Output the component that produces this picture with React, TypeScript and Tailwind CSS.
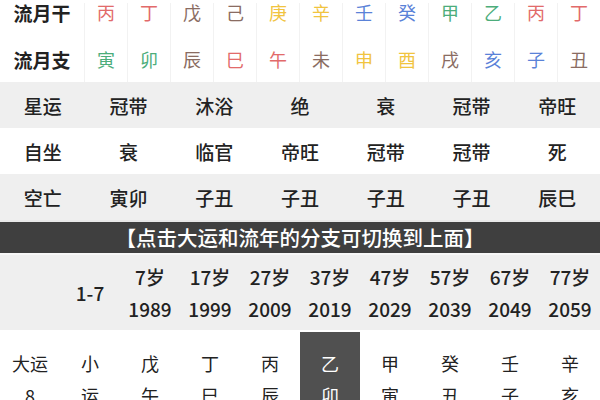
const RED = "text-[#e26a6a]";
const BROWN = "text-[#8a6c62]";
const YELLOW = "text-[#f1c43f]";
const BLUE = "text-[#5a82d8]";
const GREEN = "text-[#4cad7b]";

const GAN = [
  { c: "丙", k: RED },
  { c: "丁", k: RED },
  { c: "戊", k: BROWN },
  { c: "己", k: BROWN },
  { c: "庚", k: YELLOW },
  { c: "辛", k: YELLOW },
  { c: "壬", k: BLUE },
  { c: "癸", k: BLUE },
  { c: "甲", k: GREEN },
  { c: "乙", k: GREEN },
  { c: "丙", k: RED },
  { c: "丁", k: RED },
];

const ZHI = [
  { c: "寅", k: GREEN },
  { c: "卯", k: GREEN },
  { c: "辰", k: BROWN },
  { c: "巳", k: RED },
  { c: "午", k: RED },
  { c: "未", k: BROWN },
  { c: "申", k: YELLOW },
  { c: "酉", k: YELLOW },
  { c: "戌", k: BROWN },
  { c: "亥", k: BLUE },
  { c: "子", k: BLUE },
  { c: "丑", k: BROWN },
];

const INFO = [
  { label: "星运", vals: ["冠带", "沐浴", "绝", "衰", "冠带", "帝旺"], bg: "bg-[#efefef]" },
  { label: "自坐", vals: ["衰", "临官", "帝旺", "冠带", "冠带", "死"], bg: "bg-white" },
  { label: "空亡", vals: ["寅卯", "子丑", "子丑", "子丑", "子丑", "辰巳"], bg: "bg-[#efefef]" },
];

const AGES = [
  ["7岁", "1989"],
  ["17岁", "1999"],
  ["27岁", "2009"],
  ["37岁", "2019"],
  ["47岁", "2029"],
  ["57岁", "2039"],
  ["67岁", "2049"],
  ["77岁", "2059"],
];

const DAYUN = [
  ["戊", "午"],
  ["丁", "巳"],
  ["丙", "辰"],
  ["乙", "卯"],
  ["甲", "寅"],
  ["癸", "丑"],
  ["壬", "子"],
  ["辛", "亥"],
];

function GanZhiRow({ label, items, first }: { label: string; items: { c: string; k: string }[]; first?: boolean }) {
  return (
    <div className={`flex ${first ? "h-[36px] items-start pt-[3px]" : "h-[46px] items-center"}`}>
      <div className="w-[84px] text-center text-[19px] font-bold text-[#222]">{label}</div>
      {items.map((it, i) => (
        <div
          key={i}
          className={`w-[43px] h-full flex justify-center border-l border-[#f2f2f2] text-[18px] ${first ? "items-start" : "items-center"} ${it.k}`}
        >
          {it.c}
        </div>
      ))}
    </div>
  );
}

export default function App() {
  return (
    <div
      className="w-[600px] h-[400px] overflow-hidden bg-white leading-none"
      style={{ fontFamily: '"Noto Sans CJK SC", "Noto Sans", sans-serif' }}
    >
      <GanZhiRow label="流月干" items={GAN} first />
      <GanZhiRow label="流月支" items={ZHI} />

      {INFO.map((row) => (
        <div key={row.label} className={`grid grid-cols-7 items-center h-[46px] ${row.bg}`}>
          <div className="text-center text-[19px] font-medium text-[#222]">{row.label}</div>
          {row.vals.map((v, i) => (
            <div key={i} className="text-center text-[19px] font-medium text-[#222]">
              {v}
            </div>
          ))}
        </div>
      ))}

      <div className="h-[2px] bg-[#e8e8e8]" />
      <div className="h-[31px] bg-[#3f3f3f] flex items-center justify-center text-white text-[20.5px] font-medium">
        【点击大运和流年的分支可切换到上面】
      </div>
      <div className="h-[2px] bg-[#f7f7f7]" />

      <div className="grid grid-cols-10 items-center h-[75px] bg-[#efefef] text-[#222] text-[19px] font-medium">
        <div />
        <div className="text-center">1-7</div>
        {AGES.map(([age, year]) => (
          <div key={year} className="flex flex-col items-center">
            <div className="h-[32px] flex items-center">{age}</div>
            <div className="h-[32px] flex items-center">{year}</div>
          </div>
        ))}
      </div>

      <div className="h-[2px] bg-white" />

      <div className="grid grid-cols-10 h-[68px] text-[#222] text-[18px]">
        <div className="flex flex-col items-center pt-[15px]">
          <div className="h-[32px] flex items-center">大运</div>
          <div className="h-[32px] flex items-center">8</div>
        </div>
        <div className="flex flex-col items-center pt-[15px]">
          <div className="h-[32px] flex items-center">小</div>
          <div className="h-[32px] flex items-center">运</div>
        </div>
        {DAYUN.map(([g, z], i) => (
          <div
            key={i}
            className={`flex flex-col items-center pt-[15px] ${i === 3 ? "bg-[#505050] text-white" : ""}`}
          >
            <div className="h-[32px] flex items-center">{g}</div>
            <div className="h-[32px] flex items-center">{z}</div>
          </div>
        ))}
      </div>
    </div>
  );
}
